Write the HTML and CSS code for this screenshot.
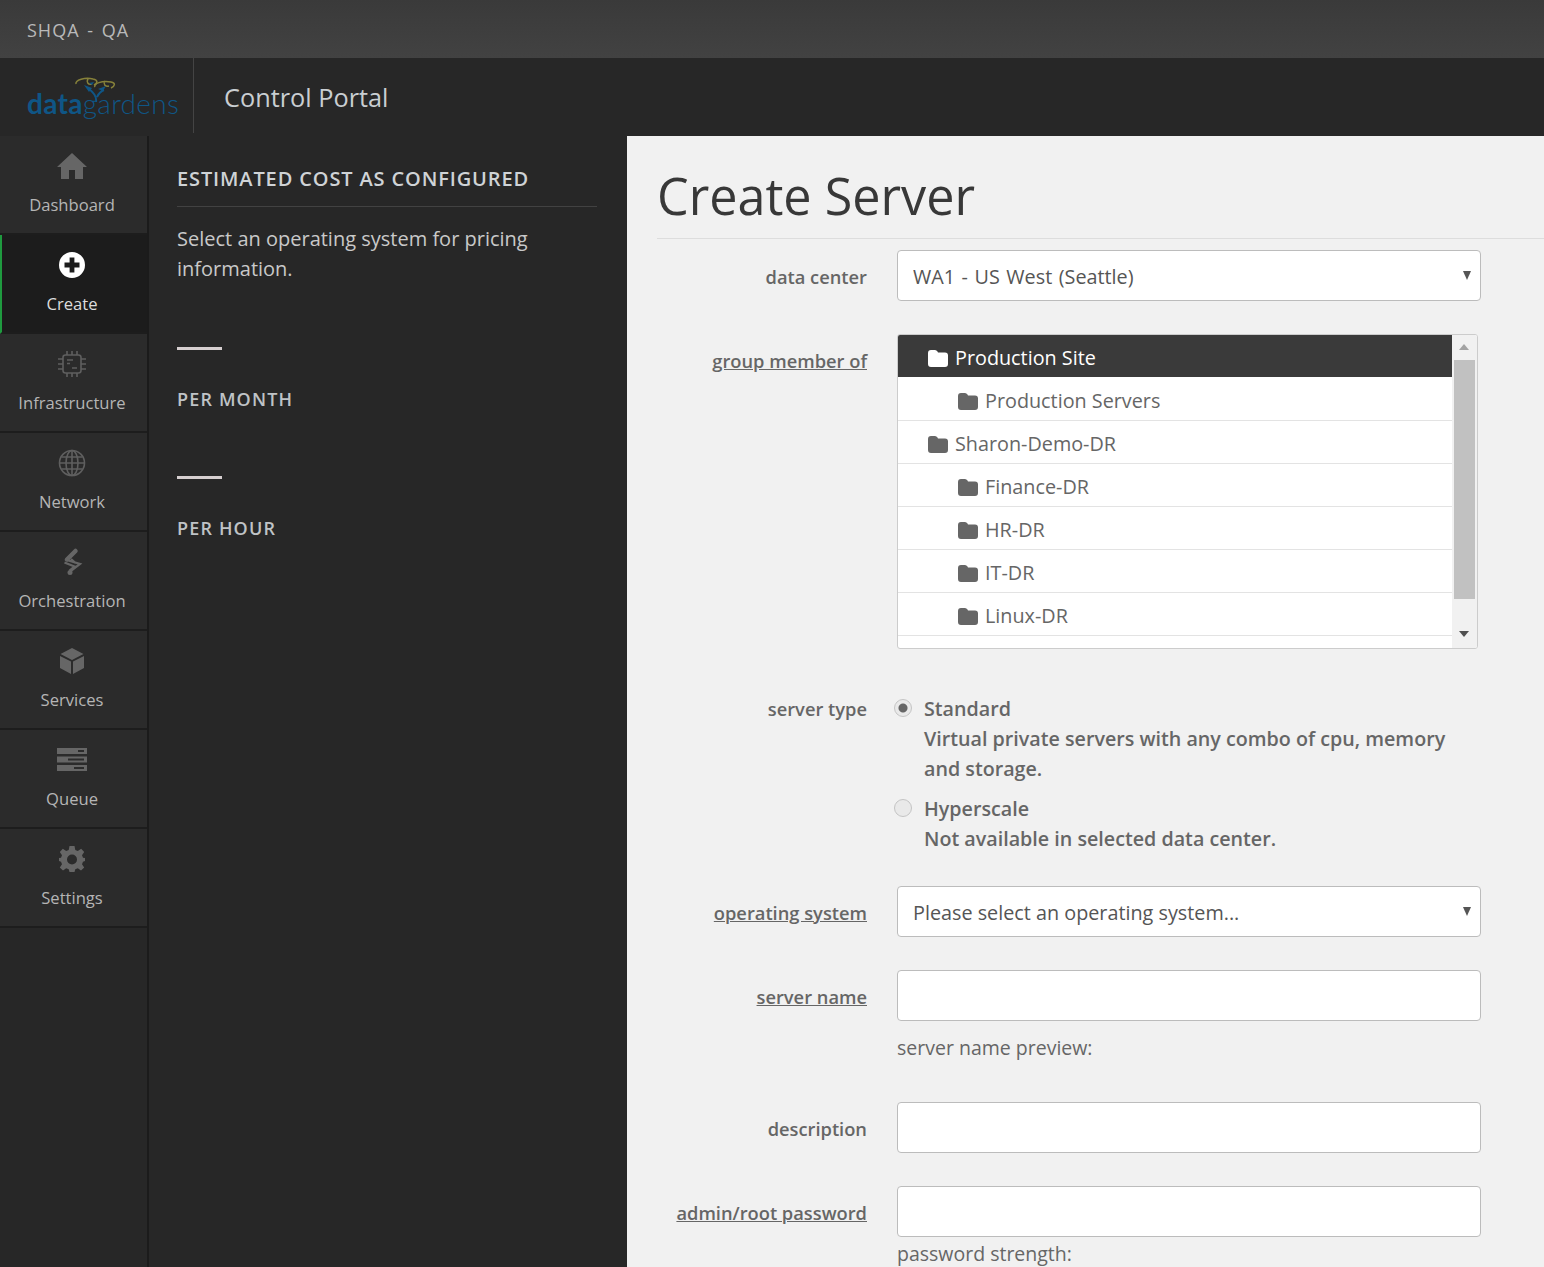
FILE: index.html
```html
<!DOCTYPE html>
<html lang="en">
<head>
    <meta charset="UTF-8">
    <title>Create Server</title>
    <link rel="stylesheet" href="styles.css">
</head>
<body>
    <div class="account-bar">SHQA - QA</div>
    <header class="app-header">
        <div class="logo">
            <span class="logo-text"><b>data</b>gardens</span>
            <svg class="logo-mark" viewBox="0 0 44 26" width="44" height="26">
                <path d="M3 8 C2 4 12 1 20 3 C25 4 25 7 21 9 M15 3 C13 6 15 9 19 8" fill="none" stroke="#86813a" stroke-width="1.500"/>
                <path d="M22 11 C20 8 29 4 38 6 C43 7 42 10 38 12 M32 5 C30 8 32 11 36 10" fill="none" stroke="#86813a" stroke-width="1.500"/>
                <path d="M23 26 C24 20 20 16 16 13 M24 21 C26 17 28 15 31 14" fill="none" stroke="#0f5686" stroke-width="2"/>
                <path d="M11 9 L19 12 L16 16 Z M25 13 L33 10 L30 15 Z M16 7 L21 6 L19 9 Z" fill="#0f5686"/>
            </svg>
        </div>
        <div class="app-title">Control Portal</div>
    </header>

    <div class="app-body">
        <nav class="side-nav">
            <a class="nav-item">
                <svg class="nav-icon" viewBox="0 0 30 30"><path d="M15 2 L30 16 L26 16 L26 28 L18 28 L18 19 L12 19 L12 28 L4 28 L4 16 L0 16 Z"/></svg>
                <span>Dashboard</span>
            </a>
            <a class="nav-item active">
                <svg class="nav-icon" viewBox="0 0 30 30"><path fill-rule="evenodd" d="M15 2 A13 13 0 1 0 15 28 A13 13 0 1 0 15 2 Z M12.6 7.5 H17.4 V12.6 H22.5 V17.4 H17.4 V22.5 H12.6 V17.4 H7.5 V12.6 H12.6 Z"/></svg>
                <span>Create</span>
            </a>
            <a class="nav-item">
                <svg class="nav-icon line" viewBox="0 0 30 30">
                    <rect x="6" y="6" width="18" height="18" rx="2.5"/>
                    <path d="M10 11 H16 M10 14.500 H13 M15 19 H20 M10 2 V6 M15 2 V6 M20 2 V6 M10 24 V28 M15 24 V28 M20 24 V28 M1 10 H6 M1 15 H6 M1 20 H6 M24 10 H29 M24 15 H29 M24 20 H29"/>
                </svg>
                <span>Infrastructure</span>
            </a>
            <a class="nav-item">
                <svg class="nav-icon line" viewBox="0 0 30 30">
                    <circle cx="15" cy="15" r="12.500"/>
                    <ellipse cx="15" cy="15" rx="6" ry="12.500"/>
                    <path d="M15 2.500 V27.500 M2.500 15 H27.500 M4.500 9 H25.500 M4.500 21 H25.500"/>
                </svg>
                <span>Network</span>
            </a>
            <a class="nav-item">
                <svg class="nav-icon orchestration" viewBox="0 0 30 30">
                    <path class="orch-bar" d="M18.500 4 L10 12.500"/>
                    <path class="orch-lines" d="M8 12.500 L23 17 L13 24.500 M14 12 L18.500 16 M7.500 15.500 L17.500 19.500 L12.500 23.500"/>
                    <circle cx="13" cy="25.500" r="2.500"/>
                </svg>
                <span>Orchestration</span>
            </a>
            <a class="nav-item">
                <svg class="nav-icon" viewBox="0 0 30 30"><path d="M15 2 L26.500 8 L15 14 L3.500 8 Z M3 10 L14 15.500 L14 28 L3 22 Z M27 10 L16 15.500 L16 28 L27 22 Z"/></svg>
                <span>Services</span>
            </a>
            <a class="nav-item">
                <svg class="nav-icon" viewBox="0 0 30 30"><path fill-rule="evenodd" d="M0 3 H30 V9 H0 Z M21 5 V7 H27 V5 Z M0 11.500 H30 V17.500 H0 Z M11 13.500 V15.500 H27 V13.500 Z M0 20 H30 V26 H0 Z M17 22 V24 H27 V22 Z"/></svg>
                <span>Queue</span>
            </a>
            <a class="nav-item">
                <svg class="nav-icon" viewBox="0 0 30 30"><path fill-rule="evenodd" d="M12.500 2 H17.500 L18.300 6 L20.800 7 L24.200 4.800 L27.200 8 L25 11.300 L26 13.800 L28 14 V17 L26 17.700 L25 20.200 L27.200 23.500 L24 26.500 L20.800 24.300 L18.300 25.300 L17.500 28 H12.500 L11.700 25.300 L9.200 24.300 L6 26.500 L2.800 23.500 L5 20.200 L4 17.700 L2 17 V14 L4 13.800 L5 11.300 L2.800 8 L5.800 4.800 L9.200 7 L11.700 6 Z M15 10.500 A5 5 0 1 0 15 20.500 A5 5 0 1 0 15 10.500 Z"/></svg>
                <span>Settings</span>
            </a>
        </nav>

        <aside class="cost-panel">
            <h2 class="cost-title">ESTIMATED COST AS CONFIGURED</h2>
            <p class="cost-note">Select an operating system for pricing information.</p>
            <div class="cost-dash"></div>
            <div class="cost-label">PER MONTH</div>
            <div class="cost-dash"></div>
            <div class="cost-label">PER HOUR</div>
        </aside>

        <main class="content">
            <h1 class="page-title">Create Server</h1>

            <form class="server-form">
                <label class="field-label">data center</label>
                <div class="select-wrap">
                    <select class="field-control center-select"><option>WA1 - US West (Seattle)</option></select>
                </div>

                <label class="field-label linked">group member of</label>
                <div class="tree-box">
                    <ul class="tree-list">
                        <li class="tree-row selected"><svg class="folder" viewBox="0 0 20 17"><path d="M3 0 H7 Q8.500 0 9.500 1.500 L10 2.500 H17 A3 3 0 0 1 20 5.500 V14 A3 3 0 0 1 17 17 H3 A3 3 0 0 1 0 14 V3 A3 3 0 0 1 3 0 Z"/></svg>Production Site</li>
                        <li class="tree-row child"><svg class="folder" viewBox="0 0 20 17"><path d="M3 0 H7 Q8.500 0 9.500 1.500 L10 2.500 H17 A3 3 0 0 1 20 5.500 V14 A3 3 0 0 1 17 17 H3 A3 3 0 0 1 0 14 V3 A3 3 0 0 1 3 0 Z"/></svg>Production Servers</li>
                        <li class="tree-row"><svg class="folder" viewBox="0 0 20 17"><path d="M3 0 H7 Q8.500 0 9.500 1.500 L10 2.500 H17 A3 3 0 0 1 20 5.500 V14 A3 3 0 0 1 17 17 H3 A3 3 0 0 1 0 14 V3 A3 3 0 0 1 3 0 Z"/></svg>Sharon-Demo-DR</li>
                        <li class="tree-row child"><svg class="folder" viewBox="0 0 20 17"><path d="M3 0 H7 Q8.500 0 9.500 1.500 L10 2.500 H17 A3 3 0 0 1 20 5.500 V14 A3 3 0 0 1 17 17 H3 A3 3 0 0 1 0 14 V3 A3 3 0 0 1 3 0 Z"/></svg>Finance-DR</li>
                        <li class="tree-row child"><svg class="folder" viewBox="0 0 20 17"><path d="M3 0 H7 Q8.500 0 9.500 1.500 L10 2.500 H17 A3 3 0 0 1 20 5.500 V14 A3 3 0 0 1 17 17 H3 A3 3 0 0 1 0 14 V3 A3 3 0 0 1 3 0 Z"/></svg>HR-DR</li>
                        <li class="tree-row child"><svg class="folder" viewBox="0 0 20 17"><path d="M3 0 H7 Q8.500 0 9.500 1.500 L10 2.500 H17 A3 3 0 0 1 20 5.500 V14 A3 3 0 0 1 17 17 H3 A3 3 0 0 1 0 14 V3 A3 3 0 0 1 3 0 Z"/></svg>IT-DR</li>
                        <li class="tree-row child"><svg class="folder" viewBox="0 0 20 17"><path d="M3 0 H7 Q8.500 0 9.500 1.500 L10 2.500 H17 A3 3 0 0 1 20 5.500 V14 A3 3 0 0 1 17 17 H3 A3 3 0 0 1 0 14 V3 A3 3 0 0 1 3 0 Z"/></svg>Linux-DR</li>
                    </ul>
                    <div class="tree-scroll">
                        <div class="scroll-up"></div>
                        <div class="scroll-thumb"></div>
                        <div class="scroll-down"></div>
                    </div>
                </div>

                <label class="field-label type-label">server type</label>
                <div class="type-options">
                    <label class="type-option">
                        <input type="radio" name="serverType" checked>
                        <span>Standard<br>Virtual private servers with any combo of cpu, memory and storage.</span>
                    </label>
                    <label class="type-option">
                        <input type="radio" name="serverType" disabled>
                        <span>Hyperscale<br>Not available in selected data center.</span>
                    </label>
                </div>

                <label class="field-label linked">operating system</label>
                <div class="select-wrap">
                    <select class="field-control"><option>Please select an operating system...</option></select>
                </div>

                <label class="field-label linked">server name</label>
                <div>
                    <input class="field-control" type="text">
                    <div class="field-help name-help">server name preview:</div>
                </div>

                <label class="field-label">description</label>
                <input class="field-control" type="text">

                <label class="field-label linked">admin/root password</label>
                <div>
                    <input class="field-control" type="password">
                    <div class="field-help strength-help">password strength:</div>
                </div>
            </form>
        </main>
    </div>
</body>
</html>
```

FILE: styles.css
```css
* {
    box-sizing: border-box;
}
html,
body {
    height: 100%;
    margin: 0;
    overflow: hidden;
}
body {
    font-family: "Open Sans", "Liberation Sans", sans-serif;
    font-size: 20px;
    line-height: 30px;
    color: #555;
    background-color: #272727;
}

.account-bar {
    height: 58px;
    padding: 15px 27px 0;
    background: linear-gradient(#3a3a3a, #424242);
    color: #b9b9b9;
    font-size: 18px;
    letter-spacing: 1px;
    word-spacing: 2px;
}

.app-header {
    height: 78px;
    display: flex;
    background-color: #272727;
}
.logo {
    width: 194px;
    height: 75px;
    border-right: 1px solid #444;
    position: relative;
}
.logo-mark {
    position: absolute;
    left: 73px;
    top: 18px;
}
.logo-text {
    position: absolute;
    left: 27px;
    top: 30px;
    font-family: "Lato", "Open Sans", sans-serif;
    font-size: 28px;
    font-weight: 300;
    color: #0f5686;
    letter-spacing: 0.3px;
}
.logo-text b {
    font-weight: 700;
}
.app-title {
    padding: 24px 0 0 30px;
    font-size: 25.3px;
    color: #c9ced2;
}

.app-body {
    height: 1131px;
    display: flex;
}

.side-nav {
    width: 149px;
    flex-shrink: 0;
    background-color: #272727;
    border-right: 2px solid #1b1b1b;
}
.nav-item {
    height: 99px;
    padding: 15px 3px 0 0;
    display: flex;
    flex-direction: column;
    align-items: center;
    gap: 10px;
    background-color: #2b2b2b;
    border-bottom: 2px solid #1d1d1d;
    color: #b5b5b5;
    font-size: 16.6px;
    line-height: 27px;
}
.nav-item.active {
    padding-right: 5px;
    background-color: #1c1c1c;
    border-left: 2px solid #1f9a3f;
    color: #ddd;
}
.nav-icon {
    width: 30px;
    height: 30px;
    fill: #666;
}
.nav-item.active .nav-icon {
    fill: #fff;
}
.nav-icon.line {
    fill: none;
    stroke: #5f5f5f;
    stroke-width: 1.6;
}
.orch-bar,
.orch-lines {
    fill: none;
    stroke: #666;
}
.orch-bar {
    stroke-width: 4.5;
    stroke-linecap: round;
}
.orch-lines {
    stroke-width: 2.2;
}

.cost-panel {
    width: 478px;
    flex-shrink: 0;
    padding: 28px 30px 0 28px;
    background-color: #272727;
}
.cost-title {
    margin: 0;
    padding-bottom: 12px;
    border-bottom: 1px solid #424242;
    color: #cfd3d6;
    font-size: 20px;
    font-weight: 600;
    letter-spacing: 0.87px;
}
.cost-note {
    margin: 17px 0 0;
    color: #c9c9c9;
}
.cost-dash {
    width: 45px;
    height: 3px;
    margin-top: 63px;
    background-color: #d6cfd0;
}
.cost-label {
    margin-top: 34px;
    color: #bfc3c6;
    font-size: 18px;
    font-weight: 600;
    letter-spacing: 1.15px;
}
.cost-label + .cost-dash {
    margin-top: 62px;
}

.content {
    flex: 1;
    padding: 22px 0 0 30px;
    background-color: #f1f1f1;
    overflow: hidden;
}
.page-title {
    margin: 0;
    height: 81px;
    border-bottom: 1px solid #ddd;
    color: #383838;
    font-size: 50.300px;
    font-weight: 400;
    line-height: 76px;
}

.server-form {
    margin-top: 11px;
    width: 824px;
    display: grid;
    grid-template-columns: 210px 584px;
    column-gap: 30px;
    row-gap: 33px;
    align-items: start;
}
.field-label {
    padding-top: 12px;
    text-align: right;
    font-size: 18.3px;
    font-weight: 600;
    color: #666;
}
.field-label.linked {
    text-decoration: underline;
}
.field-control {
    display: block;
    width: 100%;
    height: 51px;
    padding: 0 15px;
    border: 1px solid #bcbcbc;
    border-radius: 4px;
    background-color: #fff;
    font: inherit;
    font-size: 19.8px;
    color: #555;
    appearance: none;
}
select.field-control {
    padding-top: 2px;
}
.center-select {
    word-spacing: 1.4px;
}
.select-wrap {
    position: relative;
}
.select-wrap::after {
    content: "";
    position: absolute;
    right: 10px;
    top: 21px;
    border-left: 4.5px solid transparent;
    border-right: 4.5px solid transparent;
    border-top: 9px solid #555;
}
.field-help {
    color: #666;
    font-size: 19.5px;
}
.name-help {
    margin-top: 12px;
    margin-bottom: 6px;
}
.strength-help {
    margin-top: 2px;
}

.tree-box {
    width: 581px;
    height: 315px;
    display: flex;
    border: 1px solid #ccc;
    border-radius: 3px;
    background-color: #fff;
    overflow: hidden;
}
.tree-list {
    flex: 1;
    margin: 0;
    padding: 0;
    list-style: none;
}
.tree-row {
    height: 43px;
    padding: 8px 0 0 30px;
    display: flex;
    align-items: flex-start;
    border-bottom: 1px solid #e3e3e3;
    color: #666;
    font-size: 19.8px;
}
.tree-row.child {
    padding-left: 60px;
}
.tree-row.selected {
    height: 42px;
    margin-bottom: 1px;
    background-color: #3a3a3a;
    border-bottom: 0;
    color: #fff;
}
.folder {
    width: 20px;
    height: 17px;
    margin: 7px 7px 0 0;
    flex-shrink: 0;
    fill: #666;
}
.selected .folder {
    fill: #fff;
}
.tree-scroll {
    width: 25px;
    padding: 0 2px;
    background-color: #f1f1f1;
    position: relative;
}
.scroll-thumb {
    position: absolute;
    left: 2px;
    right: 2px;
    top: 25px;
    height: 239px;
    background-color: #c1c1c1;
}
.scroll-up,
.scroll-down {
    position: absolute;
    left: 7px;
    border-left: 5px solid transparent;
    border-right: 5px solid transparent;
}
.scroll-up {
    top: 9px;
    border-bottom: 6px solid #a3a3a3;
}
.scroll-down {
    bottom: 11px;
    border-top: 6px solid #505050;
}

.type-label {
    padding-top: 12px;
}
.type-options {
    margin: 12px 0 -1px;
    display: flex;
    flex-direction: column;
    gap: 10px;
    font-size: 19.7px;
    font-weight: 600;
    color: #666;
}
.type-option {
    display: flex;
    gap: 12px;
    width: 584px;
}
.type-option input {
    width: 18px;
    height: 18px;
    margin: 5px 0 0 -3px;
    flex-shrink: 0;
    appearance: none;
    border: 1px solid #c4c4c4;
    border-radius: 50%;
    background-color: #e9e9e9;
}
.type-option input:checked {
    background: radial-gradient(circle, #666 0, #666 4px, #e9e9e9 5px);
}
```
